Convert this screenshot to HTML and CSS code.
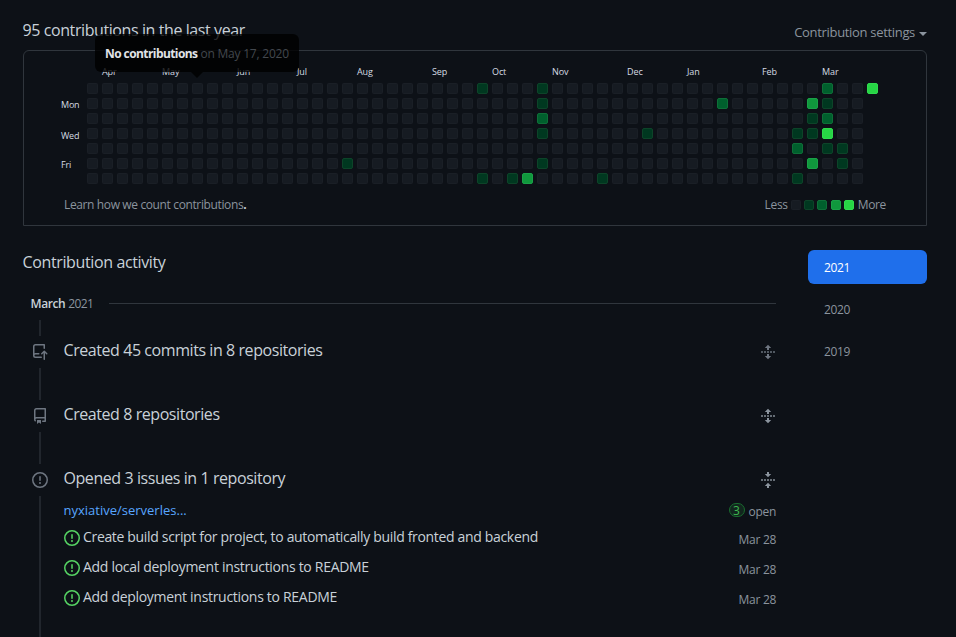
FILE: index.html
```
<!DOCTYPE html>
<html lang="en">
<head>
<meta charset="utf-8">
<title>Contributions</title>
<link rel="stylesheet" href="styles.css">
</head>
<body>
<svg class="defs" width="0" height="0" aria-hidden="true">
  <symbol id="push" viewBox="0 0 16 16"><path fill-rule="evenodd" d="M1 2.5A2.5 2.5 0 013.5 0h8.75a.75.75 0 01.75.75v3.5a.75.75 0 01-1.5 0V1.5h-8a1 1 0 00-1 1v6.708A2.492 2.492 0 013.5 9h3.25a.75.75 0 010 1.500H3.500a1 1 0 100 2h5.750a.75.75 0 010 1.500H3.500A2.500 2.500 0 011 11.500v-9zm13.230 7.790a.75.75 0 001.060-1.060l-2.505-2.505a.75.75 0 00-1.060 0L9.220 9.229a.75.75 0 001.060 1.061l1.225-1.224v6.184a.75.75 0 001.500 0V9.066l1.224 1.224z"/></symbol>
  <symbol id="repo" viewBox="0 0 16 16"><path fill-rule="evenodd" d="M2 2.500A2.500 2.500 0 014.500 0h8.750a.75.75 0 01.75.75v12.500a.75.75 0 01-.75.75h-2.500a.75.75 0 110-1.500h1.750v-2h-8a1 1 0 00-.714 1.700.75.75 0 01-1.072 1.050A2.495 2.495 0 012 11.500v-9zm10.500-1V9h-8c-.356 0-.694.074-1 .208V2.500a1 1 0 011-1h8zM5 12.250v3.250a.25.25 0 00.4.2l1.450-1.087a.25.25 0 01.3 0L8.600 15.700a.25.25 0 00.4-.2v-3.250a.25.25 0 00-.25-.25h-3.500a.25.25 0 00-.25.25z"/></symbol>
  <symbol id="issue" viewBox="0 0 16 16"><path fill-rule="evenodd" d="M8 1.500a6.500 6.500 0 100 13 6.500 6.500 0 000-13zM0 8a8 8 0 1116 0A8 8 0 010 8zm9 3a1 1 0 11-2 0 1 1 0 012 0zm-.25-6.250a.75.75 0 00-1.500 0v3.500a.75.75 0 001.500 0v-3.500z"/></symbol>
  <symbol id="unfold" viewBox="0 0 16 16"><path d="M8 .8 11.200 4H9v2H7V4H4.800zM8 15.200 4.800 12H7v-2h2v2h2.200z"/><path opacity=".7" d="M1 7h2v2H1zM4 7h2v2H4zM7 7h2v2H7zM10 7h2v2h-2zM13 7h2v2h-2z"/></symbol>
  <symbol id="fold" viewBox="0 0 16 16"><path d="M7 0h2v2h2.200L8 5.200 4.800 2H7zM7 16h2v-2h2.200L8 10.800 4.800 14H7z"/><path opacity=".7" d="M1 7h2v2H1zM4 7h2v2H4zM7 7h2v2H7zM10 7h2v2h-2zM13 7h2v2h-2z"/></symbol>
</svg>
<main class="page">
  <header class="top">
    <h2 class="heading h-total">95 contributions in the last year</h2>
    <div class="settings"><span>Contribution settings</span><i class="caret"></i></div>
  </header>
  <section class="panel">
    <div class="months" id="months"></div>
    <div class="calendar">
      <div class="days"><span></span><span class="mon">Mon</span><span></span><span class="wed">Wed</span><span></span><span class="fri">Fri</span><span></span></div>
      <div class="cells" id="cells"></div>
    </div>
    <footer class="panel-foot">
      <span class="learn">Learn how we count contributions<b>.</b></span>
      <div class="legend"><span class="less">Less</span><i class="cell l0"></i><i class="cell l1"></i><i class="cell l2"></i><i class="cell l3"></i><i class="cell l4"></i><span class="more">More</span></div>
    </footer>
    <div class="tooltip"><span class="tip-strong">No contributions</span><span class="tip-date">on May 17, 2020</span></div>
  </section>
  <div class="columns">
    <section class="activity">
      <h2 class="heading h-act">Contribution activity</h2>
      <div class="month"><span class="month-name">March</span><span class="month-year">2021</span><i class="rule"></i></div>
      <div class="item first">
        <div class="rail"><svg class="icon"><use href="#push"/></svg></div>
        <div class="item-head"><span class="heading">Created 45 commits in 8 repositories</span><svg class="toggle"><use href="#unfold"/></svg></div>
      </div>
      <div class="item">
        <div class="rail"><svg class="icon"><use href="#repo"/></svg></div>
        <div class="item-head"><span class="heading">Created 8 repositories</span><svg class="toggle"><use href="#unfold"/></svg></div>
      </div>
      <div class="item last">
        <div class="rail"><svg class="icon"><use href="#issue"/></svg></div>
        <div class="item-body">
          <div class="item-head"><span class="heading">Opened 3 issues in 1 repository</span><svg class="toggle"><use href="#fold"/></svg></div>
          <div class="repo-row"><a class="repo">nyxiative/serverles...</a><span class="open"><b class="count">3</b><span>open</span></span></div>
          <div class="issue"><svg class="green"><use href="#issue"/></svg><span class="title">Create build script for project, to automatically build fronted and backend</span><time>Mar 28</time></div>
          <div class="issue"><svg class="green"><use href="#issue"/></svg><span class="title short">Add local deployment instructions to README</span><time>Mar 28</time></div>
          <div class="issue"><svg class="green"><use href="#issue"/></svg><span class="title short">Add deployment instructions to README</span><time>Mar 28</time></div>
        </div>
      </div>
    </section>
    <nav class="years"><a class="year selected">2021</a><a class="year">2020</a><a class="year">2019</a></nav>
  </div>
</main>
<script src="calendar.js"></script>
</body>
</html>
```
FILE: styles.css
```
* { box-sizing: border-box; }
body {
  margin: 0;
  background: #0d1117;
  color: #c9d1d9;
  font-family: "Open Sans", "Noto Sans", sans-serif;
  font-size: 12px;
  line-height: 18px;
}
.defs { position: absolute; }
.page { height: 637px; padding: 18px 29px 0 23px; overflow: hidden; }
.top { display: flex; justify-content: space-between; height: 32px; }
.heading { margin: 0; font-size: 16px; font-weight: 400; line-height: 24px; white-space: nowrap; letter-spacing: -0.43px; }
.h-act { margin-left: -0.5px; letter-spacing: -0.37px; }
.h-total { margin-left: -0.5px; letter-spacing: -0.41px; }
.settings { display: flex; gap: 4px; padding-top: 5px; color: #8b949e; font-size: 13px; letter-spacing: -0.32px; }
.caret { margin-top: 9px; height: 0; border: 4px solid transparent; border-top-color: #8b949e; border-bottom: 0; }

.panel { position: relative; height: 176px; border: 1px solid #30363d; border-radius: 6px 6px 0 0; padding-top: 14px; }
.months { display: grid; grid-template-columns: repeat(53, 15px); margin-left: 63px; height: 18px; font-size: 9px; line-height: 14px; letter-spacing: -0.1px; color: #d5dce3; }
.months span { grid-row: 1; width: 0; white-space: nowrap; }
.calendar { display: flex; }
.days { display: grid; grid-template-rows: repeat(7, 15px); width: 63px; padding-left: 37px; font-size: 9px; line-height: 13px; letter-spacing: -0.2px; color: #d5dce3; }
.wed { padding-top: 1px; }
.cells { display: grid; grid-template-rows: repeat(7, 11px); grid-auto-columns: 11px; grid-auto-flow: column; gap: 4px; }
.cell { display: block; border-radius: 2px; border: 1px solid rgba(255, 255, 255, 0.02); }
.l0 { background: #161b22; }
.l1 { background: #003820; border-color: #0d4429; }
.l2 { background: #00602d; border-color: #0e6f38; }
.l3 { background: #10983d; border-color: #1aa148; }
.l4 { background: #27d545; border-color: #2fdb4e; }
.panel-foot { display: flex; justify-content: space-between; margin: 8px 40px 0 40px; color: #8b949e; }
.learn { letter-spacing: -0.37px; }
.learn b { color: #c9d1d9; }
.legend { display: flex; align-items: center; gap: 3px; }
.legend .cell { width: 10px; height: 10px; margin-top: -1px; }
.legend .l3 { margin-left: 1px; }
.legend .l4 { margin-right: 1px; }
.less { letter-spacing: -0.3px; }
.more { letter-spacing: -0.35px; }

.tooltip {
  position: absolute; left: 71px; top: -17px; width: 204px; height: 38px;
  display: flex; gap: 3px; padding: 11px 10px 9px; border-radius: 6px;
  background: rgba(0, 0, 0, 0.8); color: #43484e; white-space: nowrap;
}
.tooltip::after { content: ""; position: absolute; left: 96px; top: 38px; border: 6px solid transparent; border-top-color: rgba(0, 0, 0, 0.8); border-bottom: 0; }
.tip-strong { color: #e1e4e8; font-weight: 700; letter-spacing: -0.58px; }
.tip-date { letter-spacing: -0.22px; }

.columns { display: flex; justify-content: space-between; padding-top: 24px; }
.activity { width: 753px; }
.month { display: flex; align-items: center; height: 18px; margin: 20px 0 8px 7.5px; }
.month-name, .month-year { padding-top: 1px; }
.month-name { font-weight: 600; margin-right: 3px; letter-spacing: -0.4px; }
.month-year { color: #8b949e; letter-spacing: -0.6px; }
.rule { flex: 1; height: 1px; background: #30363d; margin-left: 16px; }
.item { display: flex; height: 64px; }
.rail {
  width: 40.5px; flex: none; padding: 24px 0 0 9px;
  background:
    linear-gradient(#21262d, #21262d) 16px 0 / 2px 16px no-repeat,
    linear-gradient(#21262d, #21262d) 16px 48px / 2px 400px no-repeat;
}
.icon { display: block; width: 16px; height: 16px; fill: #6e7681; }
.item-head { flex: 1; display: flex; justify-content: space-between; padding-top: 18px; }
.toggle { width: 16px; height: 16px; margin-top: 6px; fill: #8b949e; }
.first .toggle { fill: #6e7681; }
.last { height: 330px; }
.item-body { flex: 1; }
.repo-row { display: flex; justify-content: space-between; height: 23px; margin-top: 13px; }
.repo { color: #58a6ff; font-size: 13px; line-height: 14px; }
.open { display: flex; gap: 4px; color: #8b949e; letter-spacing: -0.3px; }
.count { width: 16px; height: 14px; border: 1px solid #196c2e; border-radius: 7px; background: #12261e; color: #3fb950; font-size: 12px; line-height: 13px; text-align: center; font-weight: 500; letter-spacing: 0; }
.issue { display: flex; height: 30px; line-height: 20px; }
.green { width: 16px; height: 16px; margin: 4px 3px 0 0.5px; fill: #56d364; }
.title { flex: 1; font-size: 14px; line-height: 22px; white-space: nowrap; letter-spacing: -0.33px; }
.short { letter-spacing: -0.3px; }
time { color: #8b949e; padding-top: 4px; letter-spacing: -0.3px; }

.years { width: 119px; display: grid; grid-auto-rows: 34px; gap: 8px; align-content: start; }
.year { padding: 9px 16px 7px; border-radius: 6px; color: #8b949e; letter-spacing: -0.4px; }
.selected { background: #1f6feb; color: #fff; }
```
FILE: calendar.js
```
const months = [["Apr", 1], ["May", 5], ["Jun", 10], ["Jul", 14], ["Aug", 18], ["Sep", 23], ["Oct", 27], ["Nov", 31], ["Dec", 36], ["Jan", 40], ["Feb", 45], ["Mar", 49]];
// One digit per weekday, keyed by week; weeks without activity are left out.
const weeks = { 17: "0000010", 26: "1000001", 28: "0000001", 29: "0000003", 30: "1121010", 34: "0000001", 37: "0001000", 42: "0200000", 47: "0001201", 48: "0311030", 49: "2124100", 50: "0000110", 52: "4" };
const row = document.getElementById("months");
for (const [name, week] of months) {
  const label = document.createElement("span");
  label.textContent = name;
  label.style.gridColumn = week + 1;
  row.append(label);
}
const cells = document.getElementById("cells");
for (let week = 0; week < 53; week++) {
  for (const level of weeks[week] || "0000000") {
    const cell = document.createElement("i");
    cell.className = "cell l" + level;
    cells.append(cell);
  }
}
```
